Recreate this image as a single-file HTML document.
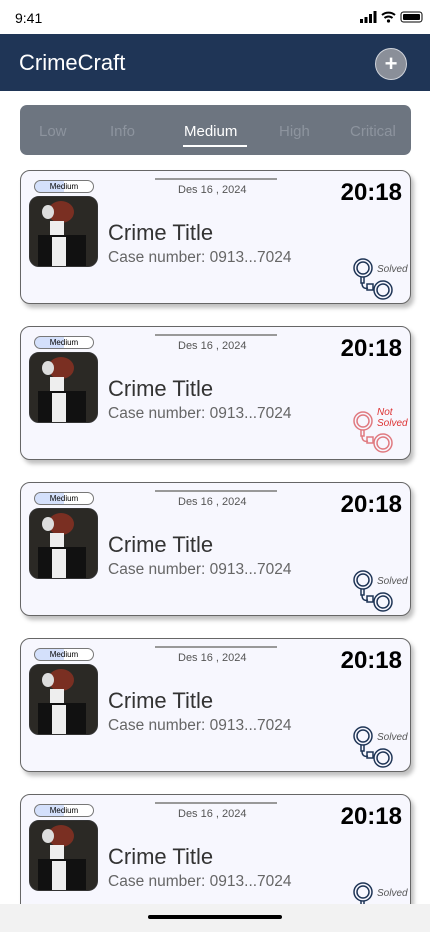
<!DOCTYPE html>
<html><head><meta charset="utf-8"><style>
*{margin:0;padding:0;box-sizing:border-box}
body{width:430px;height:932px;overflow:hidden;background:#fff;font-family:"Liberation Sans",sans-serif;position:relative}
.status{height:34px;position:relative}
.status .t{position:absolute;left:15px;top:10px;font-size:14px;color:#000}
.hdr{position:absolute;top:34px;left:0;width:430px;height:57px;background:#1f3556}
.hdr .title{position:absolute;left:19px;top:16px;color:#fff;font-size:22px}
.plus{position:absolute;left:375px;top:48px;width:32px;height:32px;border-radius:50%;background:#8a8f99;border:1px solid #cfd3da;color:#fff;font-weight:bold;font-size:22px;line-height:29px;text-align:center}
.tabs{position:absolute;left:20px;top:105px;width:391px;height:50px;background:#6d7580;border-radius:7px}
.tabs span{position:absolute;top:18px;font-size:15px;color:#8d949e}
.tabs .a{color:#fff}
.ul{position:absolute;left:183px;top:145px;width:64px;height:2px;background:#fff}
.card{position:absolute;left:20px;width:391px;height:134px;background:#f7f7fe;border:1px solid #666;border-radius:10px;box-shadow:3px 4px 4px rgba(0,0,0,.25)}
.pill{position:absolute;left:13px;top:9px;width:60px;height:13px;border:1px solid #777;border-radius:7px;background:linear-gradient(90deg,#d4e0fb 0 50%,#fff 50%);font-size:8px;text-align:center;line-height:11px;color:#000}
.line{position:absolute;left:134px;top:7px;width:122px;height:2px;background:#999}
.date{position:absolute;left:157px;top:13px;font-size:11px;color:#555}
.time{position:absolute;right:8px;top:8px;font-size:24px;font-weight:bold;color:#000}
.img{position:absolute;left:8px;top:25px;width:69px;height:71px;border-radius:10px;overflow:hidden;background:#2b2925;border:1px solid #333}
.img i{position:absolute;display:block}
.ct{position:absolute;left:87px;top:49px;font-size:22px;color:#333}
.cn{position:absolute;left:87px;top:78px;font-size:15.5px;color:#666}
.cuff{position:absolute;left:332px;top:85px}
.st{position:absolute;left:356px;top:93px;font-size:10px;font-style:italic;color:#555;line-height:11px}
.home{position:absolute;top:904px;left:0;width:430px;height:28px;background:#f2f2f2}
.home div{position:absolute;left:148px;top:11px;width:134px;height:4px;border-radius:2px;background:#000}
</style></head><body>
<div class="status"><span class="t">9:41</span>
<svg style="position:absolute;left:360px;top:11px" width="66" height="12" viewBox="0 0 66 12"><rect x="0" y="8" width="3" height="4" fill="#000"/><rect x="4.5" y="6" width="3" height="6" fill="#000"/><rect x="9" y="3" width="3" height="9" fill="#000"/><rect x="13.5" y="0" width="3" height="12" fill="#000"/><path d="M22 4a10 10 0 0 1 13 0M24.5 7a6 6 0 0 1 8 0" stroke="#000" stroke-width="2" fill="none"/><circle cx="28.5" cy="10" r="1.6" fill="#000"/><rect x="41" y="1" width="21" height="10" rx="2.5" fill="none" stroke="#000"/><rect x="43" y="3" width="17" height="6" rx="1" fill="#000"/></svg></div>
<div class="hdr"><div class="title">CrimeCraft</div></div>
<div class="plus">+</div>
<div class="tabs"><span style="left:19px">Low</span><span style="left:90px">Info</span><span class="a" style="left:164px">Medium</span><span style="left:259px">High</span><span style="left:330px">Critical</span></div>
<div class="ul"></div>

<!-- cards -->
<div class="card" style="top:170px"><div class="pill">Medium</div><div class="line"></div><div class="date">Des 16 , 2024</div><div class="time">20:18</div><div class="img"><i style="left:18px;top:4px;width:26px;height:22px;border-radius:50%;background:#7a2f22"></i><i style="left:12px;top:8px;width:12px;height:14px;background:#ddd;border-radius:50%"></i><i style="left:20px;top:24px;width:14px;height:16px;background:#eee"></i><i style="left:8px;top:38px;width:48px;height:33px;background:#111"></i><i style="left:22px;top:40px;width:14px;height:31px;background:#eee"></i></div><div class="ct">Crime Title</div><div class="cn">Case number: 0913...7024</div>
<svg class="cuff" width="40" height="46" viewBox="0 0 40 46" fill="none" stroke="#1f3556" stroke-width="1.5"><circle cx="10" cy="12" r="9"/><circle cx="10" cy="12" r="6"/><path d="M8 21v6h3v-6M9 27c0 5 3 6 6 5"/><rect x="14" y="28" width="6" height="6"/><circle cx="30" cy="34" r="9"/><circle cx="30" cy="34" r="6"/></svg><div class="st">Solved</div></div>

<div class="card" style="top:326px"><div class="pill">Medium</div><div class="line"></div><div class="date">Des 16 , 2024</div><div class="time">20:18</div><div class="img"><i style="left:18px;top:4px;width:26px;height:22px;border-radius:50%;background:#7a2f22"></i><i style="left:12px;top:8px;width:12px;height:14px;background:#ddd;border-radius:50%"></i><i style="left:20px;top:24px;width:14px;height:16px;background:#eee"></i><i style="left:8px;top:38px;width:48px;height:33px;background:#111"></i><i style="left:22px;top:40px;width:14px;height:31px;background:#eee"></i></div><div class="ct">Crime Title</div><div class="cn">Case number: 0913...7024</div>
<svg class="cuff" width="40" height="46" viewBox="0 0 40 46" fill="none" stroke="#e07a80" stroke-width="1.5" style="top:82px"><circle cx="10" cy="12" r="9"/><circle cx="10" cy="12" r="6"/><path d="M8 21v6h3v-6M9 27c0 5 3 6 6 5"/><rect x="14" y="28" width="6" height="6"/><circle cx="30" cy="34" r="9"/><circle cx="30" cy="34" r="6"/></svg><div class="st" style="color:#d33;top:80px;left:356px">Not<br>Solved</div></div>

<div class="card" style="top:482px"><div class="pill">Medium</div><div class="line"></div><div class="date">Des 16 , 2024</div><div class="time">20:18</div><div class="img"><i style="left:18px;top:4px;width:26px;height:22px;border-radius:50%;background:#7a2f22"></i><i style="left:12px;top:8px;width:12px;height:14px;background:#ddd;border-radius:50%"></i><i style="left:20px;top:24px;width:14px;height:16px;background:#eee"></i><i style="left:8px;top:38px;width:48px;height:33px;background:#111"></i><i style="left:22px;top:40px;width:14px;height:31px;background:#eee"></i></div><div class="ct">Crime Title</div><div class="cn">Case number: 0913...7024</div>
<svg class="cuff" width="40" height="46" viewBox="0 0 40 46" fill="none" stroke="#1f3556" stroke-width="1.5"><circle cx="10" cy="12" r="9"/><circle cx="10" cy="12" r="6"/><path d="M8 21v6h3v-6M9 27c0 5 3 6 6 5"/><rect x="14" y="28" width="6" height="6"/><circle cx="30" cy="34" r="9"/><circle cx="30" cy="34" r="6"/></svg><div class="st">Solved</div></div>

<div class="card" style="top:638px"><div class="pill">Medium</div><div class="line"></div><div class="date">Des 16 , 2024</div><div class="time">20:18</div><div class="img"><i style="left:18px;top:4px;width:26px;height:22px;border-radius:50%;background:#7a2f22"></i><i style="left:12px;top:8px;width:12px;height:14px;background:#ddd;border-radius:50%"></i><i style="left:20px;top:24px;width:14px;height:16px;background:#eee"></i><i style="left:8px;top:38px;width:48px;height:33px;background:#111"></i><i style="left:22px;top:40px;width:14px;height:31px;background:#eee"></i></div><div class="ct">Crime Title</div><div class="cn">Case number: 0913...7024</div>
<svg class="cuff" width="40" height="46" viewBox="0 0 40 46" fill="none" stroke="#1f3556" stroke-width="1.5"><circle cx="10" cy="12" r="9"/><circle cx="10" cy="12" r="6"/><path d="M8 21v6h3v-6M9 27c0 5 3 6 6 5"/><rect x="14" y="28" width="6" height="6"/><circle cx="30" cy="34" r="9"/><circle cx="30" cy="34" r="6"/></svg><div class="st">Solved</div></div>

<div class="card" style="top:794px"><div class="pill">Medium</div><div class="line"></div><div class="date">Des 16 , 2024</div><div class="time">20:18</div><div class="img"><i style="left:18px;top:4px;width:26px;height:22px;border-radius:50%;background:#7a2f22"></i><i style="left:12px;top:8px;width:12px;height:14px;background:#ddd;border-radius:50%"></i><i style="left:20px;top:24px;width:14px;height:16px;background:#eee"></i><i style="left:8px;top:38px;width:48px;height:33px;background:#111"></i><i style="left:22px;top:40px;width:14px;height:31px;background:#eee"></i></div><div class="ct">Crime Title</div><div class="cn">Case number: 0913...7024</div>
<svg class="cuff" width="40" height="46" viewBox="0 0 40 46" fill="none" stroke="#1f3556" stroke-width="1.5"><circle cx="10" cy="12" r="9"/><circle cx="10" cy="12" r="6"/><path d="M8 21v6h3v-6M9 27c0 5 3 6 6 5"/><rect x="14" y="28" width="6" height="6"/><circle cx="30" cy="34" r="9"/><circle cx="30" cy="34" r="6"/></svg><div class="st">Solved</div></div>

<div class="home"><div></div></div>
</body></html>
